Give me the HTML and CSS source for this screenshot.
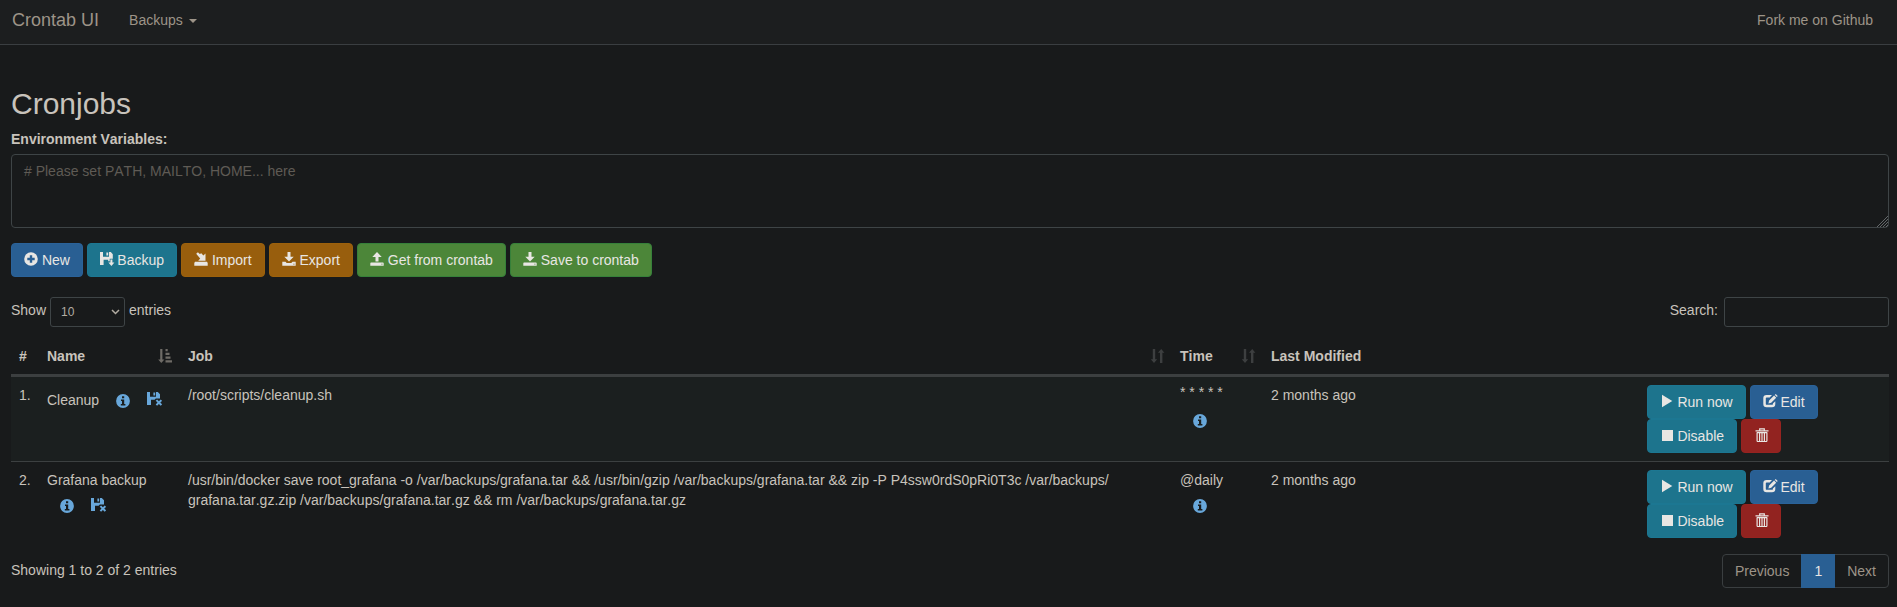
FILE: index.html
```
<!DOCTYPE html>
<html lang="en">
<head>
<meta charset="utf-8">
<title>Crontab UI</title>
<link rel="stylesheet" href="styles.css">
</head>
<body>
<svg class="sprite" aria-hidden="true">
  <symbol id="plus" viewBox="0 0 14 14"><path fill-rule="evenodd" d="M7 .2a6.8 6.8 0 1 0 0 13.6A6.8 6.8 0 0 0 7 .2zM5.8 3.3h2.4v2.5h2.5v2.4H8.200v2.500H5.800V8.200H3.300V5.800h2.500z"/></symbol>
  <symbol id="info" viewBox="0 0 14 14"><path fill-rule="evenodd" d="M7 .1a6.900 6.900 0 1 0 0 13.800A6.900 6.900 0 0 0 7 .1zM6 2.300h2.200v2H6zM5 5.500h3.200v4.600h1.200v1.500H4.800v-1.500H6V7H5z"/></symbol>
  <symbol id="floppy-save" viewBox="0 0 15 14"><path d="M0 0h3v4.700h6V0h1.800l2 2.200v4.600h-3.100v2.400H8.200V7.800H3.600v5.200H0zM6.400.5h1.800v3H6.400zM10.400 7.500h2v3h2L11.400 14 8.400 10.500h2z"/></symbol>
  <symbol id="floppy-remove" viewBox="0 0 15 14"><path d="M0 0h3v4.700h6V0h1.800L13 2.200v4.300H8.800L7.600 7.800H4v5.200H0zM6.400.5h1.800v3H6.400zM8.700 8.800l1.400-1.400L11.900 9.200l1.800-1.800 1.400 1.400-1.800 1.800 1.800 1.800-1.400 1.400-1.800-1.800-1.800 1.800-1.400-1.400 1.800-1.800z"/></symbol>
  <symbol id="import" viewBox="0 0 14 14"><path d="M2.200 1.800l1.700-1.500 1.900 1.700 1.500-.8L9.400 3.400 11.500 1.500v7.200H4.200l2-2.100zM1 9.700h12l.7 1.300v2.800H.3V11z"/></symbol>
  <symbol id="save" viewBox="0 0 14 14"><path fill-rule="evenodd" d="M5.500 0h3v4.700h3.200L7 9.600 2.300 4.700h3.200zM.3 9.700h3.200l1.200 1.400h4.600l1.200-1.400h3.200v4H.3zM11.300 11.700v.8h1.200v-.8z"/></symbol>
  <symbol id="open" viewBox="0 0 14 14"><path fill-rule="evenodd" d="M7 0l4.700 4.900H8.500v4.600h-3V4.900H2.300zM.8 10.500h12.400l.5.700v2.600H.3v-2.600zM11.300 11.700v.8h1.200v-.8z"/></symbol>
  <symbol id="download" viewBox="0 0 14 14"><path fill-rule="evenodd" d="M5.500 0h3v4.700h3.200L7 9.600 2.300 4.700h3.200zM.8 10.500h12.400l.5.700v2.600H.3v-2.600zM11.300 11.700v.8h1.200v-.8z"/></symbol>
  <symbol id="play" viewBox="0 0 14 14"><path d="M2 .8L12.300 7 2 13.200z"/></symbol>
  <symbol id="stop" viewBox="0 0 14 14"><path d="M2 2h11v11H2z"/></symbol>
  <symbol id="edit" viewBox="0 0 15 14"><path d="M9 1H3.600Q.3 1 .3 4.300v5.600q0 3.300 3.300 3.300h5.400q3.300 0 3.300-3.300V7.200l-2.400 2.300v.4q0 .9-.9.9H3.700q-.9 0-.9-.9V4.300q0-.9.9-.9h3zM5.400 9.400l.7-2.800 5-5 2.100 2.100-5 5zM11.800.9l.9-.8 2 2-.8.900z"/></symbol>
  <symbol id="trash" viewBox="0 0 14 14"><path fill="none" stroke="currentColor" stroke-width="1.200" d="M.5 2.900h13M4.700 2.700V.8h4.600v1.900M1.800 4.600h10.400M2.100 4.500v8.200q0 .8.800.8h8.200q.8 0 .8-.8V4.500M4.600 5v8M7 5v8M9.400 5v8"/></symbol>
  <symbol id="sort" viewBox="0 0 14 14"><path d="M1.800 0h2.400v10.300h2L3 14-.2 10.300h2zM9 14h2.400V3.700h2L10.200 0 7 3.700h2z"/></symbol>
  <symbol id="sort-asc" viewBox="0 0 14 14"><path d="M2.200 0h2.200v10.500h2L3.300 14 .2 10.500h2zM7.500 0h2.200v2.200H7.500zM7.500 3.800h4v2.200h-4zM7.500 7.500h5v2.200h-5zM7.500 11.200H14v2.200H7.500z"/></symbol>
</svg>

<nav class="navbar">
  <a class="brand">Crontab UI</a>
  <a class="nav-link">Backups <span class="caret"></span></a>
  <a class="nav-link nav-right">Fork me on Github</a>
</nav>

<main class="container">
  <h2 class="title">Cronjobs</h2>
  <label class="env-label" for="env">Environment Variables:</label>
  <div class="env-wrap">
    <textarea id="env" class="control env" rows="3" placeholder="# Please set PATH, MAILTO, HOME... here"></textarea>
    <svg class="grip" viewBox="0 0 11 11"><path d="M0 11L11 0M3 11l8-8M6 11l5-5M9 11l2-2"/></svg>
  </div>

  <div class="toolbar">
    <a class="btn primary"><svg class="icon"><use href="#plus"/></svg> New</a>
    <a class="btn info"><svg class="icon wide"><use href="#floppy-save"/></svg> Backup</a>
    <a class="btn warning"><svg class="icon"><use href="#import"/></svg> Import</a>
    <a class="btn warning"><svg class="icon"><use href="#save"/></svg> Export</a>
    <a class="btn success"><svg class="icon"><use href="#open"/></svg> Get from crontab</a>
    <a class="btn success"><svg class="icon"><use href="#download"/></svg> Save to crontab</a>
  </div>

  <div class="filters">
    <label class="filter"><span class="filter-text">Show</span>
      <span class="select-wrap"><select class="control small length"><option>10</option></select><svg class="chevron" viewBox="0 0 9 6"><path d="M1 1l3.500 3.500L8 1"/></svg></span>
      <span class="filter-text">entries</span></label>
    <label class="filter search-filter"><span class="filter-text">Search:</span><input class="control small search" type="search"></label>
  </div>

  <table class="jobs">
    <colgroup><col class="c-num"><col class="c-name"><col class="c-job"><col class="c-time"><col class="c-mod"><col class="c-act"></colgroup>
    <thead>
      <tr>
        <th>#</th>
        <th><div class="head">Name<svg class="sort-icon active"><use href="#sort-asc"/></svg></div></th>
        <th><div class="head">Job<svg class="sort-icon"><use href="#sort"/></svg></div></th>
        <th><div class="head">Time<svg class="sort-icon"><use href="#sort"/></svg></div></th>
        <th>Last Modified</th>
        <th></th>
      </tr>
    </thead>
    <tbody>
      <tr class="odd">
        <td>1.</td>
        <td class="one-line">Cleanup <a class="btn link"><svg class="icon"><use href="#info"/></svg></a> <a class="mail"><svg class="icon wide"><use href="#floppy-remove"/></svg></a></td>
        <td>/root/scripts/cleanup.sh</td>
        <td><span class="stars">* * * * *</span><br><a class="btn link"><svg class="icon"><use href="#info"/></svg></a></td>
        <td>2 months ago</td>
        <td><a class="btn info"><svg class="icon"><use href="#play"/></svg> Run now</a> <a class="btn primary"><svg class="icon wide"><use href="#edit"/></svg> Edit</a> <a class="btn info"><svg class="icon"><use href="#stop"/></svg> Disable</a> <a class="btn danger"><svg class="icon"><use href="#trash"/></svg></a></td>
      </tr>
      <tr>
        <td>2.</td>
        <td>Grafana backup <a class="btn link"><svg class="icon"><use href="#info"/></svg></a> <a class="mail"><svg class="icon wide"><use href="#floppy-remove"/></svg></a></td>
        <td>/usr/bin/docker save root_grafana -o /var/backups/grafana.tar &amp;&amp; /usr/bin/gzip /var/backups/grafana.tar &amp;&amp; zip -P P4ssw0rdS0pRi0T3c /var/backups/<br>grafana.tar.gz.zip /var/backups/grafana.tar.gz &amp;&amp; rm /var/backups/grafana.tar.gz</td>
        <td>@daily<br><a class="btn link"><svg class="icon"><use href="#info"/></svg></a></td>
        <td>2 months ago</td>
        <td><a class="btn info"><svg class="icon"><use href="#play"/></svg> Run now</a> <a class="btn primary"><svg class="icon wide"><use href="#edit"/></svg> Edit</a> <a class="btn info"><svg class="icon"><use href="#stop"/></svg> Disable</a> <a class="btn danger"><svg class="icon"><use href="#trash"/></svg></a></td>
      </tr>
    </tbody>
  </table>

  <div class="footer">
    <div class="summary">Showing 1 to 2 of 2 entries</div>
    <div class="pagination"><a class="page">Previous</a><a class="page current">1</a><a class="page">Next</a></div>
  </div>
</main>
</body>
</html>
```
FILE: styles.css
```
* { box-sizing: border-box; }

body {
  margin: 0;
  height: 607px;
  overflow: hidden;
  background: #181a1b;
  color: #c8c3bc;
  font: 14px/20px "Liberation Sans", Arial, sans-serif;
  font-kerning: none;
}

.sprite { display: none; }

.navbar {
  display: flex;
  align-items: center;
  height: 45px;
  padding: 0 24px 4px 12px;
  background: #1c1e1f;
  border-bottom: 1px solid #3a3e41;
  color: #9d9488;
}
.brand { font-size: 18px; margin-right: 30px; }
.nav-right { margin-left: auto; }
.caret {
  display: inline-block;
  margin-left: 2px;
  vertical-align: middle;
  border-top: 4px solid;
  border-left: 4px solid transparent;
  border-right: 4px solid transparent;
}

.container { padding: 42px 8px 0 11px; }

.title { margin: 0 0 9px; font-size: 30px; font-weight: 400; line-height: 33px; }
.env-label { display: block; margin-bottom: 5px; font-weight: 700; }

.control {
  background: #181a1b;
  border: 1px solid #3e4446;
  border-radius: 4px;
  color: #b2aca2;
  font: inherit;
  font-kerning: none;
  outline: none;
}
.env-wrap { position: relative; height: 74px; }
.env { display: block; width: 100%; height: 74px; padding: 6px 12px; resize: none; overflow: hidden; }
.env::placeholder { color: #5f5b55; opacity: 1; }
.grip { position: absolute; right: 1px; bottom: 1px; width: 11px; height: 11px; stroke: #777b7d; stroke-width: .8; }

.btn {
  display: inline-block;
  padding: 6px 12px;
  border: 1px solid transparent;
  border-radius: 4px;
  vertical-align: middle;
  white-space: nowrap;
  color: #e8e6e3;
}
.primary { background: #295f93; border-color: #2a6299; }
.info { background: #1d748d; border-color: #1c7792; }
.warning { background: #985e0d; border-color: #9c610c; }
.success { background: #4c8639; border-color: #36803a; }
.danger { background: #922320; border-color: #962320; }
.link, .mail { color: #68a7da; }
.mail { display: inline-block; vertical-align: middle; margin-top: -2px; }

.icon { width: 14px; height: 14px; vertical-align: -1px; fill: currentColor; overflow: visible; }
.icon.wide { width: 15px; margin-right: -1px; }
.info .icon { margin-right: -.5px; }
.info .icon.wide { margin-right: -1.5px; }
.one-line .link .icon { vertical-align: -2px; }
.danger .icon { margin: 0 -1px 0 1px; }

.toolbar { display: flex; gap: 4px; margin-top: 15px; }

.filters { display: flex; justify-content: space-between; margin-top: 20px; height: 30px; }
.filter { display: flex; gap: 4px; }
.filter-text { padding-top: 3px; }
.search-filter { gap: 6px; }
.small { height: 30px; border-radius: 3px; font-size: 12px; }
.select-wrap { position: relative; display: block; }
.length { display: block; width: 75px; padding: 0 10px; appearance: none; }
.chevron { position: absolute; right: 5px; top: 12px; width: 9px; height: 6px; fill: none; stroke: #b2aca2; stroke-width: 1.500; }
.search { width: 165px; appearance: none; }

.jobs { width: 1878px; margin-top: 11px; table-layout: fixed; border-collapse: separate; border-spacing: 0; }
.c-num { width: 28px; }
.c-name { width: 141px; }
.c-job { width: 992px; }
.c-time { width: 91px; }
.c-mod { width: 376px; }
.c-act { width: 250px; }
th { height: 39px; padding: 8px 8px 8px; border-bottom: 3px solid #3c3f40; text-align: left; vertical-align: top; }
td { padding: 8px; vertical-align: top; }
tr.odd td { background: #1b1f1f; border-bottom: 1px solid #3c4041; }
tr.odd td.one-line { padding-top: 7px; }
.stars { line-height: 0; vertical-align: 3px; }
.head { display: flex; justify-content: space-between; }
.sort-icon { width: 14px; height: 14px; margin: 3px -1px 0 0; fill: #3d3f40; overflow: visible; }
.sort-icon.active { margin-right: 0; fill: #6e6b66; }

.footer { display: flex; justify-content: space-between; margin-top: 8px; }
.summary { padding-top: 6px; }
.pagination { display: flex; border: 1px solid #3a3e40; border-radius: 4px; color: #9d9488; }
.page { padding: 6px 12px; }
.current { margin: -1px 0; padding: 7px 13px; background: #295f93; color: #e8e6e3; }
```
